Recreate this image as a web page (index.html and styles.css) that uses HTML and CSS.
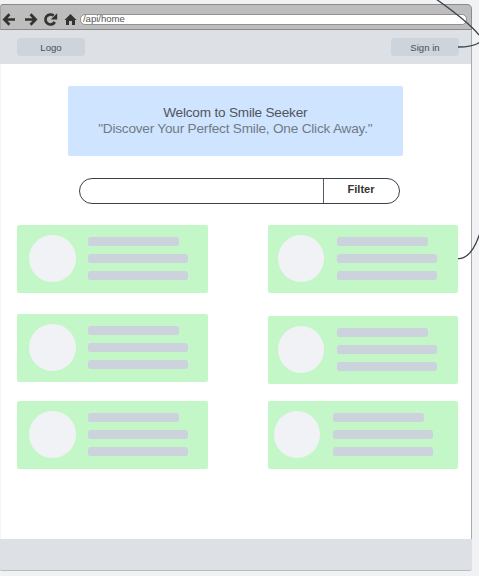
FILE: index.html
```html
<!DOCTYPE html>
<html lang="en">
<head>
<meta charset="utf-8">
<title>Smile Seeker</title>
<link rel="stylesheet" href="styles.css">
</head>
<body>
<div class="window">
  <div class="browser-bar">
    <svg class="nav-icons" width="80" height="24" viewBox="0 0 80 24" fill="none" stroke="#333" stroke-width="2.7">
      <path d="M15 14.500H5M9.500 9.300L4.400 14.500L9.500 19.700"/>
      <path d="M25 14.500H35M30.500 9.300L35.600 14.500L30.500 19.700"/>
      <path d="M54.800 17A5 5 0 1 1 53.600 10.600"/>
      <path d="M57.200 8.200V14.400H50.800Z" fill="#333" stroke="none"/>
      <path d="M70.500 9L76.500 15H75V20H72V16H69V20H66V15H64.500Z" fill="#333" stroke="none"/>
    </svg>
    <div class="address">/api/home</div>
  </div>
  <header class="header">
    <div class="button">Logo</div>
    <div class="button">Sign in</div>
  </header>
  <main class="content">
    <section class="banner">
      <div class="title">Welcom to Smile Seeker</div>
      <div class="tagline">"Discover Your Perfect Smile, One Click Away."</div>
    </section>
    <div class="search"><div class="query"></div><div class="filter">Filter</div></div>
    <div class="results">
      <div class="column">
        <div class="card"><div class="avatar"></div><div class="lines"><i></i><i></i><i></i></div></div>
        <div class="card second"><div class="avatar"></div><div class="lines"><i></i><i></i><i></i></div></div>
        <div class="card third"><div class="avatar"></div><div class="lines"><i></i><i></i><i></i></div></div>
      </div>
      <div class="column right">
        <div class="card"><div class="avatar"></div><div class="lines"><i></i><i></i><i></i></div></div>
        <div class="card second"><div class="avatar"></div><div class="lines"><i></i><i></i><i></i></div></div>
        <div class="card third"><div class="avatar"></div><div class="lines"><i></i><i></i><i></i></div></div>
      </div>
    </div>
  </main>
  <footer class="footer"></footer>
</div>
<svg class="connectors" width="479" height="576" viewBox="0 0 479 576" fill="none" stroke="#3a414a" stroke-width="1.300">
  <path d="M436 -1C453 11 471 25 479 35"/>
  <path d="M458 47C468 47 475 46 480 42"/>
  <path d="M458 258.700C468 259 475 248 480 233"/>
</svg>
</body>
</html>
```
FILE: styles.css
```css
* { box-sizing: border-box; }
body {
  margin: 0;
  height: 576px;
  overflow: hidden;
  padding-top: 4px;
  background: #f1f2f4;
  font-family: "Liberation Sans", Arial, sans-serif;
}
.window { width: 472px; height: 567px; display: flex; flex-direction: column; }
.browser-bar {
  height: 26px;
  flex: none;
  display: flex;
  background: #bdbdbd;
  border: 1px solid #8b8b8b;
  border-left-color: #a5a5a5;
  border-radius: 3px 5px 0 0;
}
.nav-icons { flex: none; margin-left: -1px; }
.address {
  margin-top: 9px;
  width: 387px;
  height: 11px;
  padding-left: 2px;
  border: 1px solid #929292;
  border-radius: 5px;
  background: #fff;
  color: #555;
  font-size: 9.600px;
  line-height: 8px;
  letter-spacing: -.05px;
  white-space: nowrap;
}
.header {
  height: 34px;
  flex: none;
  display: flex;
  justify-content: space-between;
  padding: 8px 12px 0 17px;
  background: #dde1e6;
  border-right: 1px solid #a9abad;
}
.button {
  width: 68px;
  height: 17.500px;
  border-radius: 3px;
  background: #cdd4dc;
  color: #4b4f54;
  font-size: 9.600px;
  line-height: 19px;
  text-align: center;
}
.content {
  flex: 1;
  background: #fff;
  border-left: 1px solid #f5f5f6;
  border-right: 1px solid #a9abad;
}
.banner {
  width: 335.500px;
  height: 70px;
  margin: 22px 0 0 66.500px;
  padding-top: 19px;
  border-radius: 2px;
  background: #cfe4ff;
  font-size: 13.600px;
  line-height: 16px;
  letter-spacing: -.2px;
  text-align: center;
  white-space: nowrap;
}
.title { color: #50555c; }
.tagline { color: #727a84; }
.search {
  display: flex;
  width: 321px;
  height: 26px;
  margin: 22px 0 0 78px;
  border: 1.300px solid #3a414a;
  border-radius: 14px;
}
.query { width: 244px; border-right: 1px solid #555b63; }
.filter {
  width: 74px;
  color: #333;
  font-size: 11px;
  font-weight: bold;
  line-height: 21px;
  text-align: center;
}
.results { display: flex; gap: 60px; margin: 21px 0 0 16px; }
.column { width: 190.500px; }
.right { margin-left: .3px; }
.card {
  display: flex;
  height: 68px;
  padding: 10px 0 0 12px;
  border-radius: 2px;
  background: #c3f7c8;
}
.second { margin-top: 21px; }
.third { margin-top: 19px; }
.right .card { padding-left: 9.800px; }
.right .second { margin-top: 23px; }
.right .third { margin-top: 17px; padding-left: 6px; }
.avatar { width: 46.500px; height: 47.300px; flex: none; border-radius: 50%; background: #f1f2f5; }
.lines {
  display: flex;
  flex-direction: column;
  gap: 8.100px;
  margin: 2px 0 0 12.500px;
}
.lines i { width: 100.300px; height: 9px; border-radius: 2.500px; background: #cdd3dc; }
.lines i:first-child { width: 91px; }
.footer {
  height: 32px;
  flex: none;
  background: #dde1e6;
  border-bottom: 1px solid #b8bbc1;
  border-radius: 0 0 3px 2px;
}
.connectors { position: absolute; left: 0; top: 0; pointer-events: none; }
```
